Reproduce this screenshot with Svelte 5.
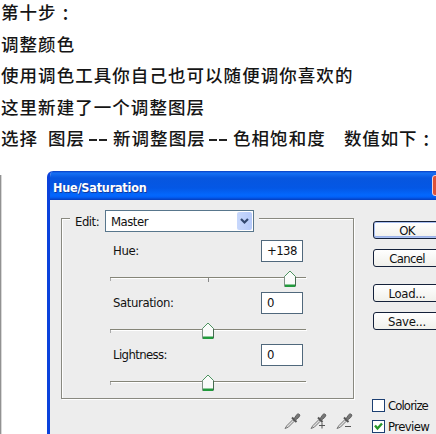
<script>
  const intro = ['调整颜色', '使用调色工具你自己也可以随便调你喜欢的', '这里新建了一个调整图层'];
  const sliders = [
    { label: 'Hue:', value: '+138', pos: 180, tick: true },
    { label: 'Saturation:', value: '0', pos: 98, tick: false },
    { label: 'Lightness:', value: '0', pos: 98, tick: false }
  ];
  const pickers = ['', 'M9 13.5h6M12 10.500v6', 'M9 14.500h6'];
</script>

<main>
  <article>
    <p class="first-line"><span>第十步</span><span class="colon">：</span></p>
    {#each intro as line}
      <p>{line}</p>
    {/each}
    <p class="path">
      <span class="w1">选择</span><span class="w2">图层</span><i></i><i class="last"></i><span class="w3">新调整图层</span><i></i><i class="last"></i><span class="w4">色相饱和度</span><span class="w5">数值如下</span><span class="colon">：</span>
    </p>
  </article>

  <div class="stage">
    <div class="edge"></div>
    <section class="dialog">
      <header><span>Hue/Saturation</span><b class="close"></b></header>
      <div class="content">
        <div class="left">
          <div class="group">
            <div class="legend">
              <span class="stub"></span>
              <span class="edit">Edit:</span>
              <div class="select">
                <span>Master</span>
                <div class="arrow">
                  <svg width="9" height="7" viewBox="0 0 9 7"><path d="M1 1l3.5 3.5L8 1" fill="none" stroke="#33486f" stroke-width="2.2" /></svg>
                </div>
              </div>
              <span class="rule"></span>
            </div>
            {#each sliders as s}
              <div class="slider">
                <div class="row">
                  <span class="l{s.label.length}">{s.label}</span>
                  <div class="field">{s.value}</div>
                </div>
                <svg class="track" width="202" height="20" viewBox="0 0 202 20">
                  <path d="M0 7.5h196" stroke="#858578" />
                  <path d="M1 8.5h196" stroke="#fff" />
                  <path d="M.5 11V8" stroke="#aaa" />
                  {#if s.tick}<path d="M98.5 8v4" stroke="#888" />{/if}
                  <g transform="translate({s.pos} 0)">
                    <path d="M-5.500 16.500V6.500L0 1l5.500 5.500v10z" fill="#fafbfa" stroke="#7e9184" />
                    <path d="M-5.500 6.500L0 1L5.500 6.500" fill="none" stroke="#4d9460" />
                    <path d="M-5 15.750h10" stroke="#229a3c" stroke-width="2.500" />
                    <path d="M5.500 7v9" stroke="#466b50" />
                  </g>
                </svg>
              </div>
            {/each}
          </div>
          <div class="pickers">
            {#each pickers as extra}
              <svg width="17" height="18" viewBox="0 0 17 18">
                <path d="M1 16.500l1.800-2.800 6-6 1.500 1.500-6 6z" fill="#ddd" stroke="#777" />
                <path d="M8 5.500l4.500 4.500" stroke="#555" stroke-width="2" />
                <path d="M10 7l2-3.500 2-1.800 2 1.300-1.300 2.500-3.200 2.500z" fill="#777" stroke="#606060" />
                {#if extra}<path d={extra} stroke="#555" />{/if}
              </svg>
            {/each}
          </div>
        </div>
        <div class="right">
          <button class="ok">OK</button>
          <button class="cancel">Cancel</button>
          <button class="load">Load...</button>
          <button class="save">Save...</button>
          <div class="check first"><span class="box"></span><span class="c1">Colorize</span></div>
          <div class="check">
            <span class="box"><svg width="9" height="9" viewBox="0 0 9 9"><path d="M1 3.500l2.500 3L8 1.500" fill="none" stroke="#26962a" stroke-width="2.400" /></svg></span>
            <span class="c2">Preview</span>
          </div>
        </div>
      </div>
    </section>
  </div>
</main>

<style>
  :global(body) { background: #fff; overflow: hidden; }
  main { width: 436px; height: 434px; overflow: hidden; display: flex; flex-direction: column; color: #111; }
  article { height: 171px; box-sizing: border-box; padding: 0 0 0 1px; flex: none; }
  p { margin: 0; height: 31.500px; line-height: 24px; font-family: "Noto Sans CJK SC", sans-serif; font-weight: 500; font-size: 17.500px; letter-spacing: 1.050px; white-space: nowrap; color: #151515; }
  .colon { font-family: "Noto Sans CJK TC", sans-serif; letter-spacing: 0; padding-top: 2px; }
  .path, .first-line { display: flex; }
  .path span { flex: none; }
  .w1 { width: 47px; }
  .w2 { width: 41px; }
  .w3 { width: 96px; }
  .w4 { width: 111px; }
  .path .w5 { letter-spacing: .85px; }
  i { width: 8px; height: 1.500px; margin: 13px 2px 0 0; background: #222; flex: none; }
  i.last { margin-right: 6px; }
  .stage { display: flex; height: 263px; }
  .edge { width: 1px; margin: 4px 46px 0 0; background: #929292; box-shadow: 1px 0 #d8d8d8; flex: none; }
  .dialog { width: 460px; flex: none; border-left: 3px solid #0b42dc; border-radius: 6px 0 0 0; background: #ededed; overflow: hidden; box-sizing: border-box; font: 13px "DejaVu Sans Condensed", "DejaVu Sans", sans-serif; color: #111; }
  header { height: 29px; box-sizing: border-box; margin-left: -3px; padding-left: 6px; display: flex; align-items: center; background: linear-gradient(#093cc0 0, #1670f4 2px, #0756df 7px, #0457e5 17px, #0368fd 24px, #0261f8 26px, #063dbd 29px); color: #fff; font: bold 12.500px "DejaVu Sans Condensed", "DejaVu Sans", sans-serif; text-shadow: 1px 1px #123c9d; }
  header span { width: 379px; letter-spacing: -.2px; padding-top: 3px; box-sizing: border-box; }
  .close { width: 21px; height: 19px; border: 1px solid #f2d3d5; border-radius: 3px; background: #dc5138; flex: none; }
  .content { display: flex; height: 234px; }
  .left { width: 323px; flex: none; }
  .group { width: 293px; height: 181px; margin: 18px 0 0 11px; box-sizing: border-box; border: 1px solid #898980; border-top: 0; box-shadow: 1px 1px #fff, inset 1px 0 #fff; }
  .legend { display: flex; height: 22px; position: relative; top: -8px; }
  .stub { width: 8px; height: 1px; margin-top: 8px; background: #898980; box-shadow: 0 1px #fff; }
  .edit { width: 35px; padding-left: 5px; box-sizing: border-box; line-height: 23px; letter-spacing: -.5px; white-space: nowrap; }
  .select { width: 149px; height: 22px; box-sizing: border-box; border: 1px solid #58768c; background: #fff; display: flex; justify-content: space-between; line-height: 21px; padding: 0 1px 0 5px; letter-spacing: -.5px; }
  .arrow { width: 15px; height: 18px; margin-top: 1px; background: linear-gradient(90deg, #c8d8fc, #b6cafa); border-radius: 2px; display: flex; align-items: center; justify-content: center; }
  .rule { width: 94px; height: 1px; margin: 8px 0 0 auto; background: #898980; box-shadow: 0 1px #fff; }
  .slider { height: 52px; padding-left: 48px; }
  .row { height: 22px; display: flex; justify-content: space-between; padding: 0 50px 0 3px; line-height: 22px; margin-bottom: 8px; }
  .field { width: 42px; height: 22px; box-sizing: border-box; border: 1px solid #50687c; background: #fff; line-height: 20px; padding-left: 5px; letter-spacing: -.6px; }
  .track { display: block; overflow: visible; }
  .l4 { letter-spacing: -.4px; }
  .l11 { letter-spacing: -.4px; }
  .l10 { letter-spacing: -.6px; }
  .pickers { display: flex; gap: 9px; margin: 13px 0 0 234px; }
  .right { flex: none; width: 120px; padding-top: 21px; box-sizing: border-box; }
  button { display: block; width: 72px; height: 18px; box-sizing: border-box; padding: 0 4px 0 0; margin: 0 0 10px; border: 1px solid #14213a; border-radius: 3px; background: linear-gradient(#fff, #f0f0eb); font: 13px/17px "DejaVu Sans Condensed", "DejaVu Sans", sans-serif; letter-spacing: -.7px; color: #111; white-space: nowrap; }
  .load, .save { letter-spacing: -.3px; }
  .ok { box-shadow: inset 0 0 0 1px #a9bff0, inset 0 -2px #9ab1e8; }
  .cancel { margin-bottom: 17px; }
  .check { display: flex; height: 21px; }
  .check.first { margin-top: 69px; }
  .box { width: 13px; height: 13px; box-sizing: border-box; border: 1px solid #1c3f72; background: #fff; margin: 0 3px 0 -1px; display: flex; align-items: center; justify-content: center; flex: none; }
  .c1, .c2 { line-height: 14px; letter-spacing: -.6px; }
  .c1 { letter-spacing: -.9px; }
</style>
